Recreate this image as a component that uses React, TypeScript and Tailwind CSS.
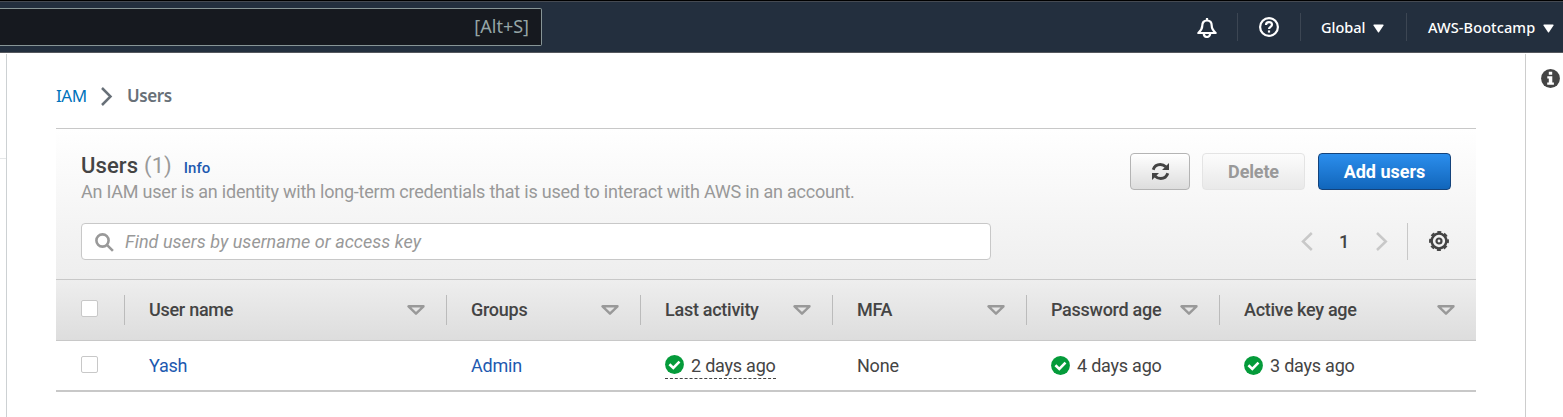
import React from "react";

const CaretDown = () => (
  <svg className="h-[9px] w-[11px] shrink-0" viewBox="0 0 11 9" fill="#fff">
    <path d="M1 .5h9a.6.6 0 0 1 .5.9L6 8.2a.6.6 0 0 1-1 0L.5 1.400A.6.6 0 0 1 1 .5z" />
  </svg>
);

const SortIcon = () => (
  <svg className="h-[10px] w-[18px] shrink-0" viewBox="0 0 18 10" fill="none" stroke="#999" strokeWidth="2.400" strokeLinejoin="round">
    <path d="M1.500 1.300h15L9 8.700z" />
  </svg>
);

const Check = () => (
  <svg className="h-[19px] w-[19px] shrink-0" viewBox="0 0 19 19">
    <circle cx="9.500" cy="9.500" r="9.400" fill="#049b3a" />
    <path d="M4.400 9.200l3.900 3.700L14.500 6.700" fill="none" stroke="#fff" strokeWidth="2.600" />
  </svg>
);

const Box = () => <span className="block h-[17px] w-[17px] rounded-[2px] border border-[#c8c8c8] bg-white" />;

function TopBar() {
  return (
    <header className="flex h-[53px] shrink-0 items-stretch border-t border-b border-t-black border-b-[#55585e] bg-[#232f3e] font-['Noto_Sans',sans-serif] shadow-[inset_0_1px_0_#454a52]">
      <div className="mt-[7px] flex h-[38px] w-[542px] items-center justify-end rounded-r-[2px] border border-l-0 border-[#879596] bg-[#16191f] pr-[12px] pb-px text-[18px] text-[#95a5a6]">
        <span className="tracking-[0px]">[Alt+S]</span>
      </div>
      <div className="mt-[2px] ml-auto flex h-[50px] items-center text-[14.500px] font-medium text-white">
        <svg className="mr-5 h-[20px] w-[20px]" viewBox="0 0 20 20" fill="none" stroke="#fff" strokeWidth="2.200" strokeLinejoin="round">
          <path d="M10 0v3" />
          <path d="M10 2.500C6.800 2.500 5.300 4.800 5.300 7.600c0 3.400-1.700 5.400-4 7.400h17.400c-2.300-2-4-4-4-7.400 0-2.800-1.500-5.100-4.700-5.100z" />
          <path d="M6.800 15.500c0 2.100 1.500 3.500 3.200 3.500s3.200-1.400 3.200-3.500" />
        </svg>
        <span className="-mt-[2px] h-7 w-px bg-[#3c4653]" />
        <svg className="mx-[21px] -mt-[2px] h-[20px] w-[20px]" viewBox="0 0 20 20" fill="none" stroke="#fff" strokeWidth="2.200">
          <circle cx="10" cy="10" r="8.900" />
          <path d="M7 8c0-1.900 1.300-2.800 3-2.800s3 1 3 2.500c0 2.100-3 2.200-3 4.300" />
          <path d="M10 13.400v2.200" />
        </svg>
        <span className="-mt-[2px] h-7 w-px bg-[#3c4653]" />
        <span className="ml-[20px] w-[52px] whitespace-nowrap">Global</span>
        <CaretDown />
        <span className="-mt-[2px] ml-[22px] h-7 w-px bg-[#3c4653]" />
        <span className="ml-[21px] w-[115px] tracking-[0.1px] whitespace-nowrap">AWS-Bootcamp</span>
        <span className="mr-[9px] flex">
          <CaretDown />
        </span>
      </div>
    </header>
  );
}

const columns = [
  { name: "User name", width: "w-[322px]" },
  { name: "Groups", width: "w-[194px]" },
  { name: "Last activity", width: "w-[192px]" },
  { name: "MFA", width: "w-[194px]" },
  { name: "Password age", width: "w-[193px]" },
  { name: "Active key age", width: "w-[257px]" },
];

function UsersPanel() {
  return (
    <section className="mt-[20px] w-[1420px] border-t border-[#c8c8c8] font-[Roboto,sans-serif] text-[18px] text-[#444]">
      <div className="h-[150px] bg-linear-to-b from-white to-[#eee] px-[25px] pt-[24px]">
        <div className="flex h-[70px] justify-between">
          <div>
            <h1 className="flex h-[26px] items-baseline text-[22px] leading-[26px] font-medium text-[#444]">
              <span className="tracking-[0.1px]">Users</span>
              <span className="ml-[6px] font-normal text-[#999]">(1)</span>
              <a className="ml-[12px] text-[15px] font-medium tracking-[0.1px] text-[#1e59b0]">Info</a>
            </h1>
            <p className="text-[18px] leading-[26px] tracking-[-0.220px] whitespace-nowrap text-[#999]">
              An IAM user is an identity with long-term credentials that is used to interact with AWS in an account.
            </p>
          </div>
          <div className="flex h-[37px] font-bold">
            <button className="flex w-[60px] items-center justify-center rounded-[4px] border border-[#b4b4b4] bg-linear-to-b from-white to-[#ddd]">
              <svg className="h-[19px] w-[19px]" viewBox="0 0 19 19" fill="none" stroke="#444" strokeWidth="2.900">
                <path d="M2.200 7.700C3.300 4.300 6 2.500 9.300 2.500c2.200 0 4 .8 5.500 2.300M16.800 11.300c-1.100 3.400-3.800 5.200-7.100 5.200-2.200 0-4-.8-5.500-2.300" />
                <path d="M18 1v7h-7zM1 18v-7h7z" fill="#444" stroke="none" />
              </svg>
            </button>
            <button className="ml-[12px] w-[103px] rounded-[4px] border border-[#e4e4e4] bg-linear-to-b from-[#fcfcfc] to-[#e9e9e9] tracking-[-0.150px] text-[#999]">Delete</button>
            <button className="ml-[13px] w-[133px] rounded-[4px] border border-[#14437b] bg-linear-to-b from-[#2b8eed] to-[#1166bb] text-white">Add users</button>
          </div>
        </div>
        <div className="flex h-[37px] items-center">
          <div className="flex h-[37px] w-[910px] items-center rounded-[4px] border border-[#c8c8c8] bg-white pl-[13px] text-[#999]">
            <svg className="mt-px mr-[11px] h-[19px] w-[19px]" viewBox="0 0 19 19" fill="none" stroke="#999" strokeWidth="2.600">
              <circle cx="7.500" cy="7.500" r="6.100" />
              <path d="M11.900 11.900l6 6" />
            </svg>
            <span className="tracking-[0.02px] italic">Find users by username or access key</span>
          </div>
          <svg className="ml-[310px] h-[19px] w-[12px]" viewBox="0 0 12 19" fill="none" stroke="#c8c8c8" strokeWidth="2.500">
            <path d="M10.800 1L2 9.500l8.800 8.500" />
          </svg>
          <span className="ml-[25px] w-[12px] text-center font-medium">1</span>
          <svg className="ml-[25px] h-[19px] w-[13px]" viewBox="0 0 13 19" fill="none" stroke="#c8c8c8" strokeWidth="2.500">
            <path d="M2 1l8.800 8.500L2 18" />
          </svg>
          <span className="ml-[19px] h-[37px] w-px bg-[#c8c8c8]" />
          <svg className="-mt-[2px] ml-[21px] h-[20px] w-[20px]" viewBox="0 0 20 20" fill="none" stroke="#444">
            <circle cx="10" cy="10" r="7.400" strokeWidth="2.500" />
            <circle cx="10" cy="10" r="9" strokeWidth="1.900" strokeDasharray="4 3.069" strokeDashoffset="2" />
            <circle cx="10" cy="10" r="2.500" strokeWidth="2.200" />
          </svg>
        </div>
      </div>
      <div className="flex h-[62px] border-y border-[#c8c8c8] bg-linear-to-b from-[#eee] to-[#ddd] font-medium">
        <div className="flex w-[68px] items-center pb-[3px] pl-[25px]">
          <Box />
        </div>
        {columns.map((c) => (
          <div key={c.name} className={`${c.width} flex items-center`}>
            <span className="h-[30px] w-px bg-[#bbb]" />
            <span className="-mt-[2px] ml-[24px] tracking-[-0.270px] whitespace-nowrap">{c.name}</span>
            <span className="mr-[21px] ml-auto">
              <SortIcon />
            </span>
          </div>
        ))}
      </div>
      <div className="flex h-[51px] items-center border-b-2 border-[#c8c8c8] bg-white tracking-[-0.220px]">
        <div className="w-[93px] pb-[2px] pl-[25px]">
          <Box />
        </div>
        <a className="w-[322px] text-[#1e59b0]">Yash</a>
        <a className="w-[194px] text-[#1e59b0]">Admin</a>
        <div className="w-[192px]">
          <span className="-mt-[2px] inline-flex h-[27px] items-center gap-[7px] border-b border-dashed border-[#444] align-middle">
            <span className="-mt-px">
              <Check />
            </span>
            <span>2 days ago</span>
          </span>
        </div>
        <span className="w-[194px]">None</span>
        <div className="flex w-[193px] items-center gap-[7px]">
          <Check />
          <span>4 days ago</span>
        </div>
        <div className="flex items-center gap-[7px]">
          <Check />
          <span>3 days ago</span>
        </div>
      </div>
    </section>
  );
}

export default function App() {
  return (
    <div className="flex h-[417px] w-[1563px] flex-col overflow-hidden bg-white">
      <TopBar />
      <div className="flex flex-1">
        <div className="mt-px w-[7px] border-r border-[#cdd1d3]">
          <div className="h-[105px] border-b border-[#e5e7e8]" />
        </div>
        <main className="w-[1518px] pl-[49px]">
          <nav className="mt-[30px] flex h-[25px] items-center font-['Noto_Sans',sans-serif] text-[17px] text-[#687078]">
            <a className="w-[44px] tracking-[-0.4px] text-[#0073bb]">IAM</a>
            <svg className="mt-px mr-[14px] h-[19px] w-[13px]" viewBox="0 0 13 19" fill="none" stroke="#687078" strokeWidth="2.500">
              <path d="M2 1l8.500 8.500L2 18" />
            </svg>
            <span className="font-semibold tracking-[-0.4px]">Users</span>
          </nav>
          <UsersPanel />
        </main>
        <aside className="mt-px flex-1 border-l border-[#cdcdcd] pt-[15px] pl-[15px]">
          <svg className="h-[19px] w-[19px]" viewBox="0 0 19 19">
            <circle cx="9.500" cy="9.500" r="9.400" fill="#444" />
            <path d="M7.800 2.800h3.400v2.900H7.800zM6.300 7.300h5v6.200h1.600v2.200H6.200v-2.200h1.600V9.500H6.300z" fill="#fff" />
          </svg>
        </aside>
      </div>
    </div>
  );
}
